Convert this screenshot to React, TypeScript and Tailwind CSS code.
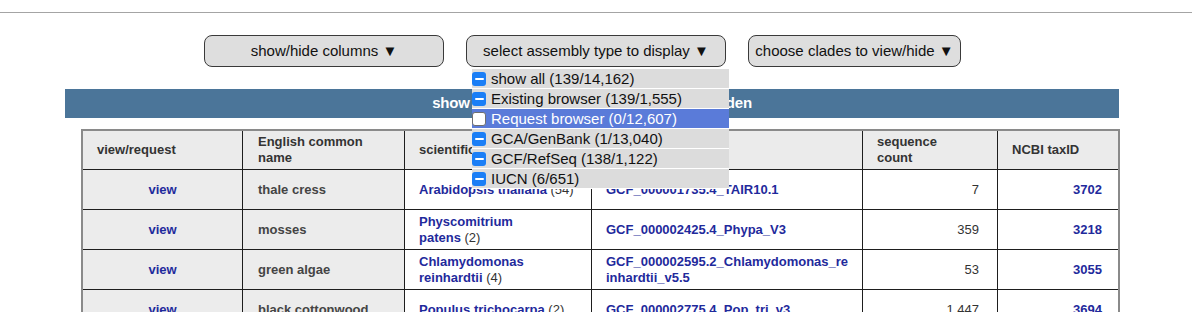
import React from "react";

const LINK = "text-[#1f2a9c]";

function CheckIcon({ checked }: { checked: boolean }) {
  if (!checked) {
    return (
      <span className="w-[14px] h-[14px] rounded-[3px] bg-white border-[1.5px] border-[#6f6f6f] shrink-0" />
    );
  }
  return (
    <span className="w-[14px] h-[14px] rounded-[3px] bg-[#1a7ef6] shrink-0 flex items-center justify-center">
      <span className="w-[9px] h-[2px] bg-white rounded-[1px]" />
    </span>
  );
}

const menu = [
  { label: "show all (139/14,162)", checked: true, hl: false },
  { label: "Existing browser (139/1,555)", checked: true, hl: false },
  { label: "Request browser (0/12,607)", checked: false, hl: true },
  { label: "GCA/GenBank (1/13,040)", checked: true, hl: false },
  { label: "GCF/RefSeq (138/1,122)", checked: true, hl: false },
  { label: "IUCN (6/651)", checked: true, hl: false },
];

type Row = {
  common: string;
  sci: React.ReactNode;
  count: string;
  asm: React.ReactNode;
  seq: string;
  tax: string;
};

const rows: Row[] = [
  {
    common: "thale cress",
    sci: <>Arabidopsis thaliana</>,
    count: "(54)",
    asm: <>GCF_000001735.4_TAIR10.1</>,
    seq: "7",
    tax: "3702",
  },
  {
    common: "mosses",
    sci: (
      <>
        Physcomitrium
        <br />
        patens
      </>
    ),
    count: "(2)",
    asm: <>GCF_000002425.4_Phypa_V3</>,
    seq: "359",
    tax: "3218",
  },
  {
    common: "green algae",
    sci: (
      <>
        Chlamydomonas
        <br />
        reinhardtii
      </>
    ),
    count: "(4)",
    asm: (
      <>
        GCF_000002595.2_Chlamydomonas_re
        <br />
        inhardtii_v5.5
      </>
    ),
    seq: "53",
    tax: "3055",
  },
  {
    common: "black cottonwood",
    sci: <>Populus trichocarpa</>,
    count: "(2)",
    asm: <>GCF_000002775.4_Pop_tri_v3</>,
    seq: "1,447",
    tax: "3694",
  },
];

const cellBase = "border-r border-b border-[#1e1e1e] flex items-center text-[13px] leading-[16px]";
const head = `${cellBase} h-[39px] bg-[#ebebeb] text-[#333]`;

export default function App() {
  return (
    <div className="w-[1192px] h-[312px] bg-white overflow-hidden font-['Liberation_Sans',Arial,'DejaVu_Sans',sans-serif] text-[#111]">
      <div className="h-[12px]" />
      <div className="border-t border-[#a4a4a4]" />

      {/* buttons */}
      <div className="flex pt-[22px] pl-[204px] gap-[22px]">
        <button className="w-[240px] h-[32px] rounded-[8px] border border-[#3a3a3a] bg-[#dedede] text-[15px] text-[#111] flex items-center justify-center">
          show/hide columns ▼
        </button>
        <div className="relative">
          <button className="w-[260px] h-[32px] rounded-[8px] border border-[#3a3a3a] bg-[#dedede] text-[15px] text-[#111] flex items-center justify-center">
            select assembly type to display ▼
          </button>
          <div className="absolute left-[6px] top-[34px] w-[257px] z-10">
            {menu.map((m) => (
              <div
                key={m.label}
                className={`h-[20px] border-b border-white flex items-center gap-[5px] text-[15px] leading-[19px] ${
                  m.hl ? "bg-[#5a7bd9] text-white" : "bg-[#dcdcdc] text-[#111]"
                }`}
              >
                <CheckIcon checked={m.checked} />
                <span>{m.label}</span>
              </div>
            ))}
          </div>
        </div>
        <button className="w-[213px] h-[32px] rounded-[8px] border border-[#3a3a3a] bg-[#dedede] text-[15px] text-[#111] flex items-center justify-center">
          choose clades to view/hide ▼
        </button>
      </div>

      {/* title bar */}
      <div className="mt-[22px] ml-[65px] w-[1054px] h-[29px] bg-[#4b7599] flex items-center justify-center text-white font-bold text-[15px] tracking-[-0.2px]">
        show 139 of 14,162 assemblies, 14,023 hidden
      </div>

      {/* table */}
      <div className="mt-[11px] ml-[81px] w-[1039px] border-2 border-[#8a8a8a] font-bold">
        <div className="grid grid-cols-[160px_162px_187px_271px_135px_120px]">
          {/* header */}
          <div className={`${head} pl-[14px]`}>view/request</div>
          <div className={`${head} pl-[15px]`}>
            <span>
              English common
              <br />
              name
            </span>
          </div>
          <div className={`${head} pl-[14px]`}>scientific name</div>
          <div className={`${head} pl-[14px]`}>NCBI Assembly</div>
          <div className={`${head} pl-[14px]`}>
            <span>
              sequence
              <br />
              count
            </span>
          </div>
          <div className={`${head} border-r-0 pl-[14px]`}>NCBI taxID</div>

          {rows.map((r) => (
            <React.Fragment key={r.tax}>
              <div className={`${cellBase} h-[40px] bg-[#ececec] justify-center`}>
                <span className={LINK}>view</span>
              </div>
              <div className={`${cellBase} h-[40px] bg-[#ececec] text-[#444] pl-[15px]`}>{r.common}</div>
              <div className={`${cellBase} h-[40px] bg-white pl-[14px]`}>
                <span>
                  <span className={LINK}>{r.sci}</span>{" "}
                  <span className="font-normal text-[#333]">{r.count}</span>
                </span>
              </div>
              <div className={`${cellBase} h-[40px] bg-white pl-[14px]`}>
                <span className={LINK}>{r.asm}</span>
              </div>
              <div className={`${cellBase} h-[40px] bg-white justify-end pr-[18px] font-normal text-[#333]`}>
                {r.seq}
              </div>
              <div className={`${cellBase} border-r-0 h-[40px] bg-white justify-end pr-[16px]`}>
                <span className={LINK}>{r.tax}</span>
              </div>
            </React.Fragment>
          ))}
        </div>
      </div>
    </div>
  );
}
